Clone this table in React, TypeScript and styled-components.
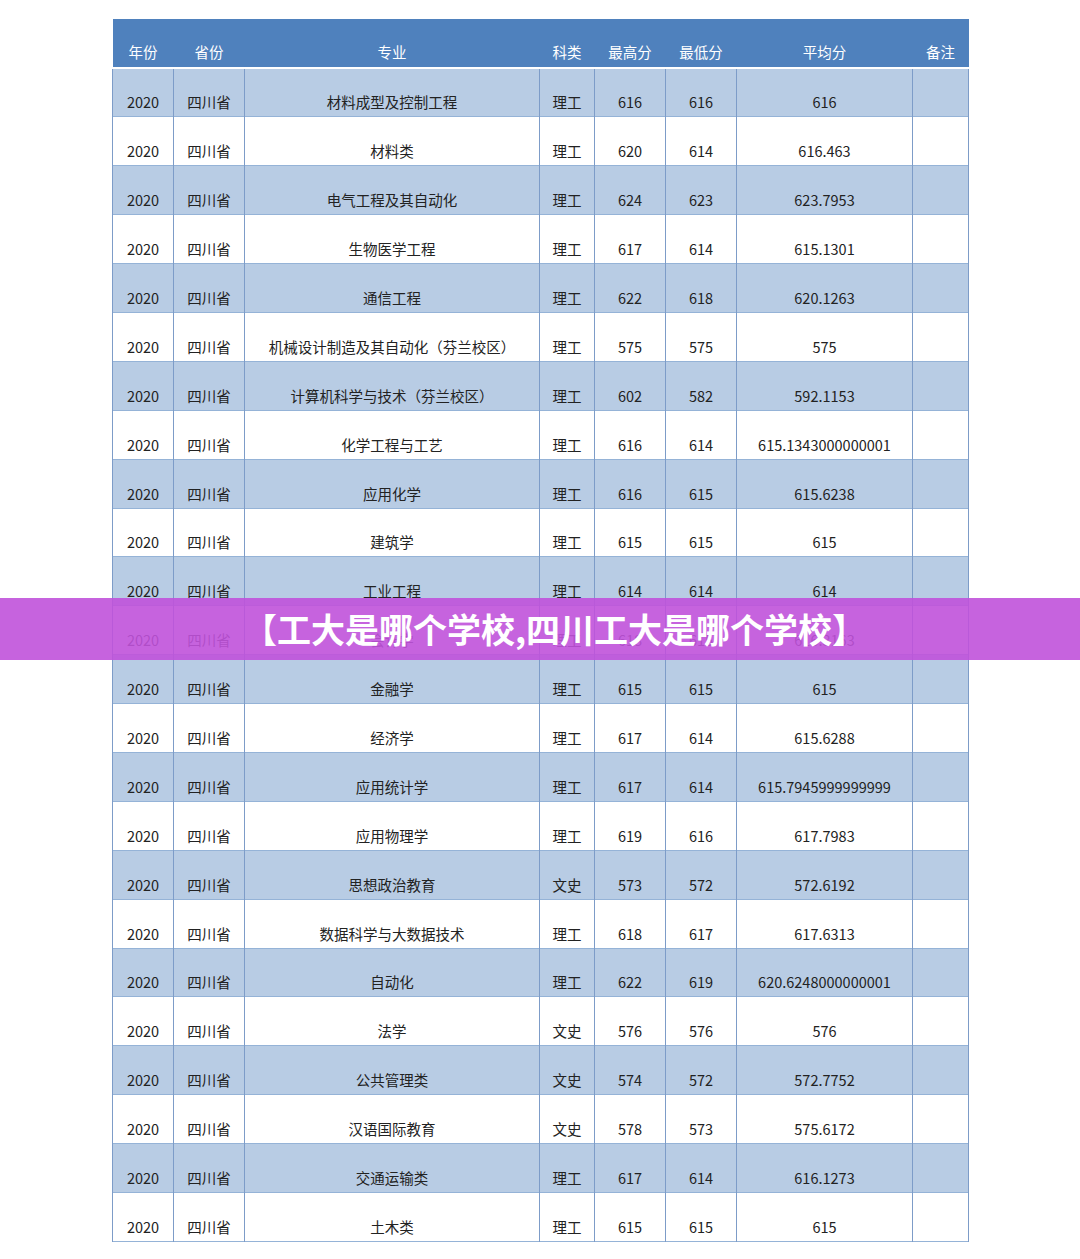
import styled, { createGlobalStyle } from "styled-components";

type Row = [string, string, string, string, string];

const GlobalStyle = createGlobalStyle`
  html, body {
    margin: 0;
    padding: 0;
    background: #ffffff;
  }
  body {
    font-family: "Noto Sans CJK SC", "Noto Sans", sans-serif;
  }
`;

const columns = [61, 71, 295, 55, 71, 71, 176, 56];
const headers = ["年份", "省份", "专业", "科类", "最高分", "最低分", "平均分", "备注"];

const rows: Row[] = [
  ["材料成型及控制工程", "理工", "616", "616", "616"],
  ["材料类", "理工", "620", "614", "616.463"],
  ["电气工程及其自动化", "理工", "624", "623", "623.7953"],
  ["生物医学工程", "理工", "617", "614", "615.1301"],
  ["通信工程", "理工", "622", "618", "620.1263"],
  ["机械设计制造及其自动化（芬兰校区）", "理工", "575", "575", "575"],
  ["计算机科学与技术（芬兰校区）", "理工", "602", "582", "592.1153"],
  ["化学工程与工艺", "理工", "616", "614", "615.1343000000001"],
  ["应用化学", "理工", "616", "615", "615.6238"],
  ["建筑学", "理工", "615", "615", "615"],
  ["工业工程", "理工", "614", "614", "614"],
  ["会计学", "理工", "618", "615", "616.3163"],
  ["金融学", "理工", "615", "615", "615"],
  ["经济学", "理工", "617", "614", "615.6288"],
  ["应用统计学", "理工", "617", "614", "615.7945999999999"],
  ["应用物理学", "理工", "619", "616", "617.7983"],
  ["思想政治教育", "文史", "573", "572", "572.6192"],
  ["数据科学与大数据技术", "理工", "618", "617", "617.6313"],
  ["自动化", "理工", "622", "619", "620.6248000000001"],
  ["法学", "文史", "576", "576", "576"],
  ["公共管理类", "文史", "574", "572", "572.7752"],
  ["汉语国际教育", "文史", "578", "573", "575.6172"],
  ["交通运输类", "理工", "617", "614", "616.1273"],
  ["土木类", "理工", "615", "615", "615"],
];

const Page = styled.div`
  position: relative;
  padding: 19px 0 16px 112px;
`;

const Table = styled.table`
  border-collapse: collapse;
  table-layout: fixed;
  width: 856px;
  font-size: 14.5px;
  color: #222;
`;

const HeadRow = styled.tr`
  background: #4f81bd;
  height: 49px;
  border-bottom: 2px solid #ffffff;
`;

const HeadCell = styled.th`
  font-weight: 400;
  color: #ffffff;
  text-align: center;
  vertical-align: bottom;
  padding: 0 0 5px;
  white-space: nowrap;
`;

const BodyRow = styled.tr<{ $shaded: boolean }>`
  height: 48.9px;
  background: ${(p) => (p.$shaded ? "#b8cce4" : "#ffffff")};
  border-bottom: 1px solid #95b3d7;
`;

const Cell = styled.td`
  text-align: center;
  vertical-align: bottom;
  padding: 0 0 4px;
  border-left: 1px solid #7d9cc8;
  border-right: 1px solid #7d9cc8;
  white-space: nowrap;
`;

const Banner = styled.div`
  position: absolute;
  left: 0;
  right: 0;
  top: 598px;
  height: 62px;
  background: rgba(192, 82, 218, 0.9);
  display: flex;
  align-items: center;
  padding-left: 243px;
  box-sizing: border-box;
`;

const BannerText = styled.span`
  color: #ffffff;
  font-size: 34px;
  font-weight: 700;
  line-height: 1;
`;

export default function App() {
  return (
    <>
      <GlobalStyle />
      <Page>
        <Table>
          <colgroup>
            {columns.map((w, i) => (
              <col key={i} style={{ width: w }} />
            ))}
          </colgroup>
          <thead>
            <HeadRow>
              {headers.map((h) => (
                <HeadCell key={h}>{h}</HeadCell>
              ))}
            </HeadRow>
          </thead>
          <tbody>
            {rows.map((r, i) => (
              <BodyRow key={i} $shaded={i % 2 === 0}>
                <Cell>2020</Cell>
                <Cell>四川省</Cell>
                {r.map((v, j) => (
                  <Cell key={j}>{v}</Cell>
                ))}
                <Cell />
              </BodyRow>
            ))}
          </tbody>
        </Table>
        <Banner>
          <BannerText>【工大是哪个学校,四川工大是哪个学校】</BannerText>
        </Banner>
      </Page>
    </>
  );
}
